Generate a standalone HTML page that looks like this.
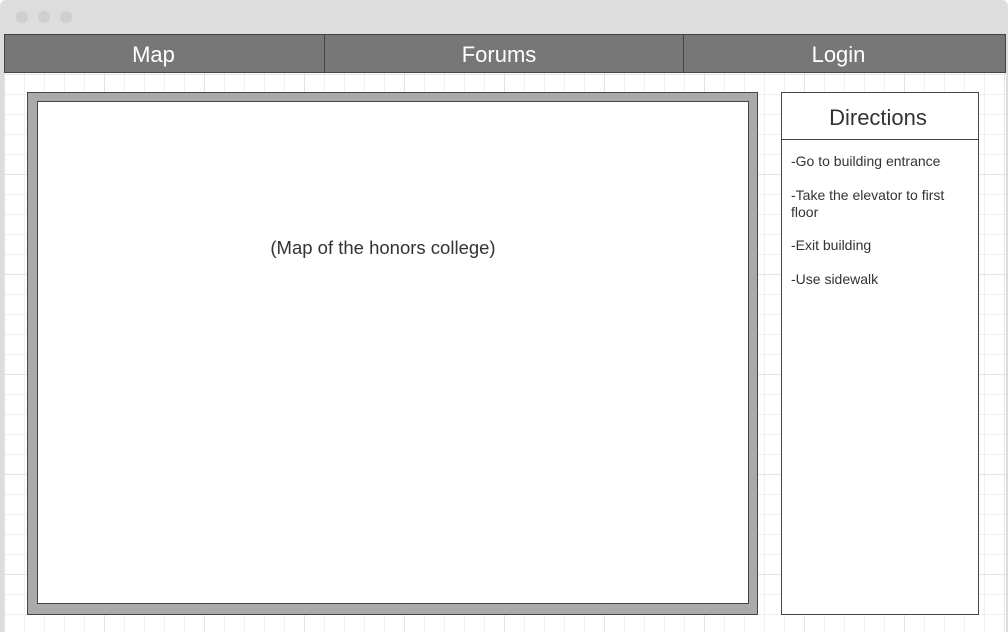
<!DOCTYPE html>
<html><head><style>
*{margin:0;padding:0;box-sizing:border-box}
body{width:1008px;height:632px;background:#fff;font-family:"Liberation Sans",sans-serif;position:relative;overflow:hidden}
.win{position:absolute;left:0;top:0;width:1008px;height:632px;background:#ddd;border-radius:6px 6px 0 0}
.dot{position:absolute;top:11px;width:12px;height:12px;border-radius:50%;background:#cfcfcf}
.content{position:absolute;left:4px;top:72px;width:1002px;height:560px;background-color:#fff;
background-image:linear-gradient(#e4e4e4 1px,transparent 1px),linear-gradient(90deg,#e4e4e4 1px,transparent 1px),linear-gradient(#f0f0f0 1px,transparent 1px),linear-gradient(90deg,#f0f0f0 1px,transparent 1px);
background-size:100px 100px,100px 100px,20px 20px,20px 20px;background-position:0 2px,0 0,0 2px,0 0}
.nav{position:absolute;left:4px;top:34px;width:1002px;height:39px;background:#777;border:1px solid #444;display:flex}
.nav div{color:#fff;font-size:22px;display:flex;align-items:center;justify-content:center;height:100%;padding-top:3px}
.map{position:absolute;left:27px;top:92px;width:731px;height:523px;background:#aaa;border:1px solid #444}
.inner{position:absolute;left:9px;top:8px;width:712px;height:503px;background:#fff;border:1px solid #444}
.inner span{position:absolute;left:0;width:690px;top:135px;text-align:center;font-size:18.5px;color:#333}
.dir{position:absolute;left:781px;top:92px;width:198px;height:523px;background:#fff;border:1px solid #444}
.dh{height:47px;border-bottom:1px solid #444;font-size:22px;color:#333;text-align:center;line-height:50px;padding-right:4px}
.dir p{font-size:14px;color:#333;padding:0 9px;line-height:17px}
</style></head><body>
<div class="win"></div>
<div class="dot" style="left:16px"></div><div class="dot" style="left:38px"></div><div class="dot" style="left:60px"></div>
<div class="content"></div>
<div class="nav">
<div style="width:320px;border-right:1px solid #444;padding-right:22px">Map</div>
<div style="width:359px;border-right:1px solid #444;padding-right:10px">Forums</div>
<div style="flex:1;padding-right:12px">Login</div>
</div>
<div class="map"><div class="inner"><span>(Map of the honors college)</span></div></div>
<div class="dir"><div class="dh">Directions</div>
<p style="margin-top:13px">-Go to building entrance</p>
<p style="margin-top:17px">-Take the elevator to first floor</p>
<p style="margin-top:16px">-Exit building</p>
<p style="margin-top:17px">-Use sidewalk</p>
</div>
</body></html>
